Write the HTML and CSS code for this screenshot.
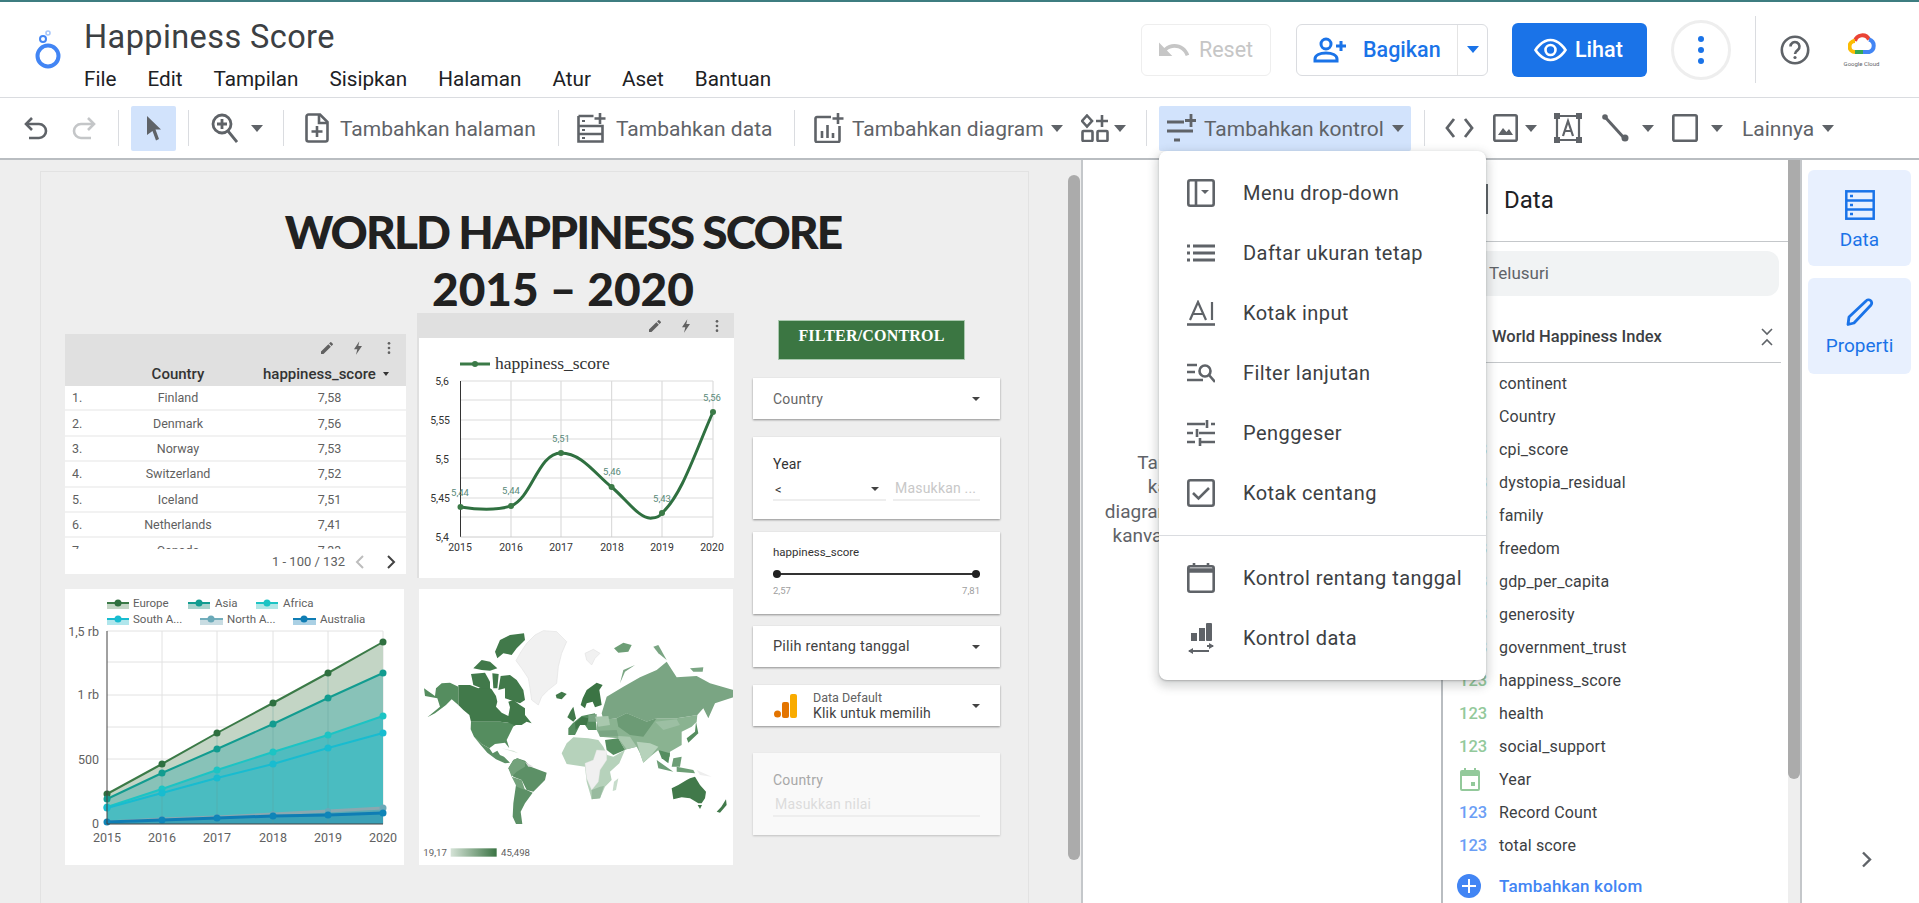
FILE: index.html
```html
<!DOCTYPE html>
<html lang="id">
<head>
<meta charset="utf-8">
<title>Happiness Score</title>
<link rel="stylesheet" href="styles.css">
</head>
<body>
<div class="app">
  <header class="header">
    <svg class="logo" width="28" height="40" viewBox="0 0 28 40"><circle cx="14" cy="26" r="10.5" fill="none" stroke="#4285f4" stroke-width="4"/><circle cx="9" cy="9" r="3" fill="none" stroke="#4285f4" stroke-width="2"/><circle cx="14" cy="3" r="2" fill="none" stroke="#a8c7fa" stroke-width="1.6"/></svg>
    <div class="doc">
      <div class="doc-title">Happiness Score</div>
      <nav class="menubar"><span>File</span><span>Edit</span><span>Tampilan</span><span>Sisipkan</span><span>Halaman</span><span>Atur</span><span>Aset</span><span>Bantuan</span></nav>
    </div>
    <div class="actions">
      <div class="btn-reset">
        <svg width="31" height="22" viewBox="2 6 21 12"><path fill="#c6c6c6" d="M12.5 8c-2.65 0-5.05.99-6.9 2.6L2 7v9h9l-3.62-3.62c1.39-1.16 3.16-1.88 5.12-1.88 3.54 0 6.55 2.31 7.6 5.5l2.37-.78C21.08 11.03 17.15 8 12.5 8z"/></svg>
        <span>Reset</span>
      </div>
      <div class="btn-share">
        <div class="share-main">
          <svg width="34" height="26" viewBox="0 0 34 26" fill="none" stroke="#1a73e8" stroke-width="3"><circle cx="13" cy="7" r="5"/><path d="M2 24v-2c0-4 5-6 11-6s11 2 11 6v2z"/><path d="M23 9h10M28 4v10"/></svg>
          <span>Bagikan</span>
        </div>
        <div class="share-more"><i class="caret caret-blue"></i></div>
      </div>
      <div class="btn-view">
        <svg width="33" height="24" viewBox="0 0 33 24" fill="none" stroke="#fff" stroke-width="2.6"><path d="M1.5 12S7.5 2 16.5 2s15 10 15 10-6 10-15 10-15-10-15-10z"/><circle cx="16.5" cy="12" r="5"/></svg>
        <span>Lihat</span>
      </div>
      <div class="btn-more"><i></i><i></i><i></i></div>
      <div class="head-sep"></div>
      <svg class="help" width="30" height="30" viewBox="0 0 30 30"><circle cx="15" cy="15" r="13.2" fill="none" stroke="#5f6368" stroke-width="2.6"/><path d="M10.5 11.5a4.5 4.5 0 1 1 7.2 3.6c-1.6 1.2-2.7 2-2.7 4" fill="none" stroke="#5f6368" stroke-width="2.6"/><circle cx="15" cy="22.5" r="1.6" fill="#5f6368"/></svg>
      <div class="gcloud">
        <svg width="28" height="23" viewBox="0 0 28 23" fill="none" stroke-width="4"><path d="M7 9a7.500 7.500 0 0 1 14-1.500" stroke="#ea4335"/><path d="M21 7.500A6.500 6.500 0 0 1 21 20H15" stroke="#4285f4"/><path d="M15 20H7" stroke="#34a853"/><path d="M7 20A5.500 5.500 0 0 1 7 9" stroke="#fbbc04"/></svg>
        <span>Google Cloud</span>
      </div>
    </div>
  </header>

  <div class="toolbar">
    <svg class="g0" width="25" height="26" viewBox="0 0 25 26" fill="none" stroke="#5f6368" stroke-width="2.6"><path d="M9 3L3 9l6 6"/><path d="M3 9h13a6 6 0 0 1 0 14H6"/></svg>
    <svg class="g24" width="25" height="26" viewBox="0 0 25 26" fill="none" stroke="#c4c6c8" stroke-width="2.6"><path d="M16 3l6 6-6 6"/><path d="M22 9H9a6 6 0 0 0 0 14h10"/></svg>
    <div class="sep g21"></div>
    <div class="tool-on g12"><svg width="16" height="26" viewBox="0 0 16 26"><path fill="#5f6368" d="M1 1l14 13.500H9.500L13 24l-3 1.500L6.500 16 1 20z"/></svg></div>
    <div class="sep g12"></div>
    <svg class="g22" width="27" height="30" viewBox="0 0 27 30" fill="none" stroke="#5f6368" stroke-width="2.800"><circle cx="11" cy="11" r="9"/><path d="M11 6v10M6 11h10M17 18l9 11"/></svg>
    <i class="caret g13"></i>
    <div class="sep g20"></div>
    <svg class="g21" width="24" height="30" viewBox="0 0 24 30" fill="none" stroke="#5f6368" stroke-width="2.600"><path d="M15 1.500H3.500a2 2 0 0 0-2 2v23a2 2 0 0 0 2 2h17a2 2 0 0 0 2-2V9z"/><path d="M14 2v8h8M12 13v11M6.500 18.500h11"/></svg>
    <span class="tool-text g11 w196">Tambahkan halaman</span>
    <div class="sep g22"></div>
    <svg class="g18" width="29" height="30" viewBox="0 0 29 30" fill="none" stroke="#5f6368" stroke-width="2.600"><path d="M1.500 3h15M1.500 3v25.500h24V13h-24M1.500 21h24M1.500 11"/><path d="M23 0v11M17.500 5.500h11" /><path d="M5 8h3M5 17h3M5 25h3" stroke-width="2"/></svg>
    <span class="tool-text g10 w155">Tambahkan data</span>
    <div class="sep g23"></div>
    <svg class="g19" width="30" height="30" viewBox="0 0 30 30" fill="none" stroke="#5f6368" stroke-width="2.600"><path d="M17 4H3a1.500 1.500 0 0 0-1.500 1.500v22A1.500 1.500 0 0 0 3 29h21a1.500 1.500 0 0 0 1.500-1.500V13"/><path d="M24 0v11M18.500 5.500h11M8 25v-7M13.500 25V12M19 25v-5"/></svg>
    <span class="tool-text g8 w191">Tambahkan diagram</span>
    <i class="caret g8"></i>
    <svg class="g18" width="28" height="28" viewBox="0 0 28 28" fill="none" stroke="#5f6368" stroke-width="2.600"><path d="M6 1.500L11 7 6 12.500 1 7zM21 1v12M15 7h12"/><rect x="1.500" y="17" width="10" height="10" rx="1"/><rect x="16.500" y="17" width="10" height="10" rx="1"/></svg>
    <i class="caret g5"></i>
    <div class="sep g20"></div>
    <div class="tool-active g12">
      <svg width="29" height="28" viewBox="0 0 29 28" fill="none" stroke="#5f6368" stroke-width="2.800"><path d="M0 8h17M24 0v13M18 6.500h11M0 17h26M7 26h6"/></svg>
      <span class="tool-text g8 w180">Tambahkan kontrol</span>
      <i class="caret g8"></i>
    </div>
    <div class="sep g13"></div>
    <svg class="g20" width="29" height="22" viewBox="0 0 29 22" fill="none" stroke="#5f6368" stroke-width="2.800"><path d="M9 2L2 11l7 9M20 2l7 9-7 9"/></svg>
    <svg class="g19" width="25" height="28" viewBox="0 0 25 28"><rect x="1.300" y="1.300" width="22.400" height="25.400" rx="1.500" fill="none" stroke="#5f6368" stroke-width="2.600"/><path fill="#5f6368" d="M5 21l5-7 3.500 4 2.500-3 4 6z"/></svg>
    <i class="caret g7"></i>
    <svg class="g17" width="28" height="30" viewBox="0 0 28 30" fill="none" stroke="#5f6368" stroke-width="2.200"><path d="M4 3h20M4 27h20M3 5v20M25 5v20"/><path d="M0 0h6v6H0zM22 0h6v6h-6zM0 24h6v6H0zM22 24h6v6h-6z" fill="#5f6368" stroke="none"/><path d="M9 23l5-15 5 15M11 18h6"/></svg>
    <svg class="g20" width="27" height="28" viewBox="0 0 27 28" fill="none" stroke="#5f6368" stroke-width="3"><path d="M3 3l20 22"/><circle cx="3" cy="3" r="2.800" fill="#5f6368" stroke="none"/><circle cx="23" cy="24" r="3.500" fill="#5f6368" stroke="none"/></svg>
    <i class="caret g13"></i>
    <svg class="g18" width="26" height="28" viewBox="0 0 26 28"><rect x="1.300" y="1.300" width="23.400" height="25.400" rx="1.500" fill="none" stroke="#5f6368" stroke-width="2.600"/></svg>
    <i class="caret g13"></i>
    <span class="tool-text g19 w73">Lainnya</span>
    <i class="caret g7"></i>
  </div>

  <main class="main">
    <section class="canvas">
      <div class="page">
        <h1 class="report-title"><span class="title-top">WORLD HAPPINESS SCORE</span><br>2015 – 2020</h1>

        <div class="table-card">
          <div class="widget-bar">
            <svg width="16" height="16" viewBox="0 0 24 24"><path fill="#616161" d="M3 17.250V21h3.750L17.810 9.940l-3.750-3.750L3 17.250zM20.710 7.040a1 1 0 0 0 0-1.410l-2.340-2.340a1 1 0 0 0-1.410 0l-1.830 1.830 3.750 3.750 1.830-1.830z"/></svg>
            <svg width="16" height="16" viewBox="0 0 24 24"><path fill="#616161" d="M14 2L6 14h5l-2 8 9-13h-5.500z"/></svg>
            <svg width="16" height="16" viewBox="0 0 24 24"><circle cx="12" cy="5" r="2" fill="#616161"/><circle cx="12" cy="12" r="2" fill="#616161"/><circle cx="12" cy="19" r="2" fill="#616161"/></svg>
          </div>
          <div class="t-head"><span></span><span>Country</span><span class="t-sort">happiness_score<i class="caret caret-mini"></i></span></div>
          <div class="t-body">
            <div class="t-row"><span>1.</span><span>Finland</span><span>7,58</span></div>
            <div class="t-row"><span>2.</span><span>Denmark</span><span>7,56</span></div>
            <div class="t-row"><span>3.</span><span>Norway</span><span>7,53</span></div>
            <div class="t-row"><span>4.</span><span>Switzerland</span><span>7,52</span></div>
            <div class="t-row"><span>5.</span><span>Iceland</span><span>7,51</span></div>
            <div class="t-row"><span>6.</span><span>Netherlands</span><span>7,41</span></div>
            <div class="t-row"><span>7.</span><span>Canada</span><span>7,33</span></div>
          </div>
          <div class="t-foot">
            <span>1 - 100 / 132</span>
            <svg width="10" height="14" viewBox="0 0 10 14" fill="none" stroke="#bdbdbd" stroke-width="2"><path d="M8 1L2 7l6 6"/></svg>
            <svg width="10" height="14" viewBox="0 0 10 14" fill="none" stroke="#424242" stroke-width="2"><path d="M2 1l6 6-6 6"/></svg>
          </div>
        </div>

        <div class="line-card">
          <div class="widget-bar widget-bar-line">
            <svg width="16" height="16" viewBox="0 0 24 24"><path fill="#616161" d="M3 17.250V21h3.750L17.810 9.940l-3.750-3.750L3 17.250zM20.710 7.040a1 1 0 0 0 0-1.410l-2.340-2.340a1 1 0 0 0-1.410 0l-1.830 1.830 3.750 3.750 1.830-1.830z"/></svg>
            <svg width="16" height="16" viewBox="0 0 24 24"><path fill="#616161" d="M14 2L6 14h5l-2 8 9-13h-5.500z"/></svg>
            <svg width="16" height="16" viewBox="0 0 24 24"><circle cx="12" cy="5" r="2" fill="#616161"/><circle cx="12" cy="12" r="2" fill="#616161"/><circle cx="12" cy="19" r="2" fill="#616161"/></svg>
          </div>
          <svg class="line-svg" width="315" height="240" viewBox="419 338 315 240">
            <path d="M460 364h30" stroke="#3b7a47" stroke-width="3"/><circle cx="475" cy="364" r="3" fill="#3b7a47"/>
            <text x="495" y="369" class="serif-legend">happiness_score</text>
            <g stroke="#dcdcdc" stroke-width="1.200" fill="none">
              <path d="M460.500 381H713M460.500 400H713M460.500 420H713M460.500 439H713M460.500 459H713M460.500 478H713M460.500 498H713M460.500 517H713"/>
              <path d="M511 381V537M561 381V537M611.600 381V537M662 381V537M713 381V537"/>
            </g>
            <path d="M460.500 381V537" stroke="#333" stroke-width="1"/>
            <path d="M460.500 537H713" stroke="#ccc"/>
            <path d="M460.500 507C480 510 498 510 511 506C532 498 538 453 561 453C582 453 596 475 611.600 487C626 499 640 520 652 518C657 518 660 516 662 513C682 495 696 450 713 412" fill="none" stroke="#2f7040" stroke-width="3"/>
            <g fill="#3b7a47"><circle cx="460.500" cy="507" r="3"/><circle cx="511" cy="506" r="3"/><circle cx="561" cy="453" r="3"/><circle cx="611.600" cy="487" r="3"/><circle cx="662" cy="513" r="3"/><circle cx="713" cy="412" r="3"/></g>
            <g class="axis" text-anchor="end"><text x="449" y="385">5,6</text><text x="450" y="424">5,55</text><text x="449" y="463">5,5</text><text x="450" y="502">5,45</text><text x="449" y="541">5,4</text></g>
            <g class="axis" text-anchor="middle"><text x="460" y="551">2015</text><text x="511" y="551">2016</text><text x="561" y="551">2017</text><text x="612" y="551">2018</text><text x="662" y="551">2019</text><text x="712" y="551">2020</text></g>
            <g class="val" text-anchor="middle"><text x="460" y="496">5,44</text><text x="511" y="494">5,44</text><text x="561" y="442">5,51</text><text x="612" y="475">5,46</text><text x="662" y="502">5,43</text><text x="712" y="401">5,56</text></g>
          </svg>
        </div>

        <div class="area-card">
          <svg width="339" height="276" viewBox="65 589 339 276">
            <g class="legend-row">
              <rect x="107" y="603" width="22" height="6" fill="#c3d5c5"/><path d="M107 603h22" stroke="#3b7a47" stroke-width="2"/><circle cx="118" cy="603" r="3.500" fill="#2f7040"/><text x="133" y="607">Europe</text>
              <rect x="188" y="603" width="22" height="6" fill="#a9d3cd"/><path d="M188 603h22" stroke="#129c90" stroke-width="2"/><circle cx="199" cy="603" r="3.500" fill="#129c90"/><text x="215" y="607">Asia</text>
              <rect x="256" y="603" width="22" height="6" fill="#b0e6e6"/><path d="M256 603h22" stroke="#1cc4c4" stroke-width="2"/><circle cx="267" cy="603" r="3.500" fill="#1cc4c4"/><text x="283" y="607">Africa</text>
              <rect x="107" y="619" width="22" height="6" fill="#b0e6ec"/><path d="M107 619h22" stroke="#18bcd0" stroke-width="2"/><circle cx="118" cy="619" r="3.500" fill="#18bcd0"/><text x="133" y="623">South A...</text>
              <rect x="200" y="619" width="23" height="6" fill="#c8dce2"/><path d="M200 619h23" stroke="#72aebc" stroke-width="2"/><circle cx="211" cy="619" r="3.500" fill="#6aa9b8"/><text x="227" y="623">North A...</text>
              <rect x="293" y="619" width="23" height="6" fill="#aad0e4"/><path d="M293 619h23" stroke="#0f7db4" stroke-width="2"/><circle cx="304" cy="619" r="3.500" fill="#0f7db4"/><text x="320" y="623">Australia</text>
            </g>
            <g stroke="#e2e2e2" stroke-width="1" fill="none"><path d="M107 631H383M107 662H383M107 695H383M107 727H383M107 759H383M107 791H383"/><path d="M162 631V824M217 631V824M273 631V824M328 631V824M383 631V824"/></g>
            <polygon fill="#c3d5c5" points="107,794 162,764 217,733 273,703 328,673 383,642 383,824 107,824"/>
            <polygon fill="#88c2b8" points="107,799 162,773 217,749 273,724 328,698 383,673 383,824 107,824"/>
            <polygon fill="#50bcbf" points="107,807 162,789 217,770 273,752 328,735 383,716 383,824 107,824"/>
            <polygon fill="#4abcc1" points="107,808 162,793 217,778 273,764 328,748 383,733 383,824 107,824"/>
            <polygon fill="#58a9b6" points="107,822 162,819 217,817 273,814 328,811 383,808 383,824 107,824"/>
            <polygon fill="#3aa0b6" points="107,822 162,820 217,818 273,816 328,815 383,813 383,824 107,824"/>
            <g stroke="#5f9f95" stroke-opacity=".35" fill="none"><path d="M162 764V824M217 733V824M273 703V824M328 673V824"/></g>
            <polyline class="s1" points="107,794 162,764 217,733 273,703 328,673 383,642"/>
            <polyline class="s2" points="107,799 162,773 217,749 273,724 328,698 383,673"/>
            <polyline class="s3" points="107,807 162,789 217,770 273,752 328,735 383,716"/>
            <polyline class="s4" points="107,808 162,793 217,778 273,764 328,748 383,733"/>
            <polyline class="s5" points="107,822 162,819 217,817 273,814 328,811 383,808"/>
            <polyline class="s6" points="107,822 162,820 217,818 273,816 328,815 383,813"/>
            <g fill="#2f7040"><circle cx="107" cy="794" r="3.500"/><circle cx="162" cy="764" r="3.500"/><circle cx="217" cy="733" r="3.500"/><circle cx="273" cy="703" r="3.500"/><circle cx="328" cy="673" r="3.500"/><circle cx="383" cy="642" r="3.500"/></g>
            <g fill="#129c90"><circle cx="107" cy="799" r="3.500"/><circle cx="162" cy="773" r="3.500"/><circle cx="217" cy="749" r="3.500"/><circle cx="273" cy="724" r="3.500"/><circle cx="328" cy="698" r="3.500"/><circle cx="383" cy="673" r="3.500"/></g>
            <g fill="#1cc4c4"><circle cx="107" cy="807" r="3.500"/><circle cx="162" cy="789" r="3.500"/><circle cx="217" cy="770" r="3.500"/><circle cx="273" cy="752" r="3.500"/><circle cx="328" cy="735" r="3.500"/><circle cx="383" cy="716" r="3.500"/></g>
            <g fill="#18bcd0"><circle cx="107" cy="808" r="3.500"/><circle cx="162" cy="793" r="3.500"/><circle cx="217" cy="778" r="3.500"/><circle cx="273" cy="764" r="3.500"/><circle cx="328" cy="748" r="3.500"/><circle cx="383" cy="733" r="3.500"/></g>
            <g fill="#6aa9b8"><circle cx="162" cy="819" r="3"/><circle cx="217" cy="817" r="3"/><circle cx="273" cy="814" r="3"/><circle cx="328" cy="811" r="3"/><circle cx="383" cy="808" r="3.500"/></g>
            <g fill="#0f85b8"><circle cx="107" cy="822" r="3.500"/><circle cx="162" cy="820" r="3.500"/><circle cx="217" cy="818" r="3.500"/><circle cx="273" cy="816" r="3.500"/><circle cx="328" cy="815" r="3.500"/><circle cx="383" cy="813" r="3.500"/></g>
            <path d="M107 631V824H383" fill="none" stroke="#424242" stroke-width="1"/>
            <g class="area-axis" text-anchor="end"><text x="99" y="636">1,5 rb</text><text x="99" y="699">1 rb</text><text x="99" y="764">500</text><text x="99" y="828">0</text></g>
            <g class="area-axis" text-anchor="middle"><text x="107" y="842">2015</text><text x="162" y="842">2016</text><text x="217" y="842">2017</text><text x="273" y="842">2018</text><text x="328" y="842">2019</text><text x="383" y="842">2020</text></g>
          </svg>
        </div>

        <div class="map-card">
          <svg width="314" height="276" viewBox="27 -3 942 828">
            <defs><linearGradient id="scale"><stop offset="0" stop-color="#d5e3d7"/><stop offset="1" stop-color="#3b7444"/></linearGradient></defs>
            <g class="map-land">
              <g fill="#f1f1f1" stroke="#e2e2e2" stroke-width="2">
                <polygon points="318,212 330,190 350,160 375,135 400,122 440,125 470,155 455,190 445,230 440,280 415,300 395,320 385,345 365,330 360,295 355,265 335,235"/>
                <polygon points="525,190 550,178 570,190 555,205 545,225 530,210"/>
              </g>
              <g fill="#41794a">
                <polygon points="145,285 180,285 205,295 225,285 245,298 258,318 262,335 258,350 275,368 295,378 300,352 295,335 310,330 330,345 345,355 345,375 365,400 350,395 335,405 318,405 305,412 295,398 270,395 183,395 178,375 160,360 145,345"/>
                <polygon points="265,300 285,295 285,325 330,340 345,330 340,300 320,270 300,255 272,258"/>
                <polygon points="255,185 270,150 300,135 342,130 345,150 320,175 305,195 280,190 262,205"/>
                <polygon points="190,235 215,210 240,215 262,235 240,242 215,240"/>
                <polygon points="183,252 225,248 240,275 240,295 215,295 190,285"/>
                <polygon points="247,250 266,252 262,295 250,295"/>
                <polygon points="437,315 455,305 470,312 455,328 440,325"/>
                <polygon points="785,595 805,585 830,570 840,565 855,560 870,585 888,605 885,625 875,640 865,640 840,625 815,622 790,628"/>
                <polygon points="863,645 876,645 870,657"/>
                <polygon points="920,665 934,650 948,628 950,645 930,668"/>
                <polygon points="472,382 482,362 490,350 498,385 490,395"/>
              </g>
              <polygon fill="#8ab391" points="575,390 620,385 650,370 710,395 740,385 800,385 830,380 862,375 860,395 845,410 815,425 815,465 780,485 780,500 755,490 745,480 720,500 700,518 690,490 680,470 650,478 645,480 625,445 570,440 560,420 560,400"/>
              <g fill="#558d5f">
                <polygon points="42,295 75,318 78,295 95,280 120,278 145,290 145,345 125,328 108,345 75,370 52,382 90,350 82,325 45,318"/>
                <polygon points="183,395 270,395 295,398 312,405 300,430 290,450 298,475 285,458 255,462 238,475 215,462 192,440 182,418"/>
                <polygon points="488,400 515,378 555,370 560,420 535,420 525,405 510,405 495,435 475,435 475,415"/>
                <polygon points="858,395 865,430 835,458 830,445 855,425"/>
                <polygon points="585,450 625,445 645,480 610,495 590,480"/>
                <polygon points="745,480 780,490 775,520 755,505"/>
              </g>
              <polygon fill="#3f7748" points="495,398 515,380 535,385 530,405 510,405 497,420"/>
              <polygon fill="#7aa583" points="535,375 560,372 560,395 535,395"/>
              <polygon fill="#3b7444" points="512,345 518,325 530,300 560,278 578,285 568,300 575,345 555,352 548,335 530,340 525,355"/>
              <g fill="#5c9066">
                <polygon points="192,440 215,462 238,475 248,490 262,482 270,495 282,500 300,518 285,520 258,508 232,488 212,465"/>
                <polygon points="295,535 310,510 322,505 345,512 362,530 410,548 405,570 385,590 370,605 350,600 335,570 310,560"/>
                <polygon points="318,585 350,600 368,608 345,640 332,665 337,702 318,702 308,680 310,640"/>
              </g>
              <polygon fill="#73a27b" points="295,535 310,510 322,505 345,515 345,530 320,545 305,560"/>
              <polygon fill="#73a27b" points="305,560 335,570 345,600 320,590"/>
              <polygon fill="#dddddd" points="345,515 370,530 355,530"/>
              <polygon fill="#cfe0d2" points="275,475 310,482 325,490 300,482"/>
              <g fill="#7aa583">
                <polygon points="575,370 590,320 640,290 690,262 740,240 770,215 800,262 860,258 900,280 970,300 970,322 915,340 895,385 880,355 862,375 830,380 800,385 740,385 710,395 650,370 620,385 580,390"/>
                <polygon points="565,422 620,420 625,438 570,440"/>
                <polygon points="730,170 745,165 770,210 745,190"/>
                <polygon points="630,280 640,240 675,225 645,245"/>
                <polygon points="840,235 880,232 878,245 850,245"/>
              </g>
              <polygon fill="#6c9b75" points="620,385 650,370 710,395 740,385 700,440 660,435 625,410"/>
              <polygon fill="#9cbfa3" points="735,395 800,388 810,405 760,420"/>
              <g fill="#6d9e76">
                <polygon points="612,175 640,158 665,165 655,185 625,188"/>
                <polygon points="740,510 790,545 745,535"/>
                <polygon points="800,530 850,540 855,550 800,545"/>
                <polygon points="790,505 815,500 810,530 785,530"/>
              </g>
              <g fill="#a9c8ae">
                <polygon points="555,380 595,378 600,405 565,410"/>
                <polygon points="625,438 660,440 680,470 650,478 625,445"/>
              </g>
              <polygon fill="#b6d2bb" points="680,455 720,460 745,470 720,500 700,518 690,490"/>
              <polygon fill="#b6d2bb" points="455,490 470,460 490,442 535,445 565,450 580,470 592,495 610,500 645,480 628,520 600,545 605,570 585,590 570,625 545,628 530,575 525,530 490,525 470,522"/>
              <polygon fill="#c7dccb" points="612,575 625,565 618,600 608,603"/>
              <polygon fill="#f0f0f0" stroke="#e4e4e4" points="525,520 550,510 560,480 590,482 590,510 570,540 565,575 545,600 530,565"/>
              <polygon fill="#98bb9f" points="545,600 570,590 582,588 570,625 545,628"/>
              <polygon fill="#eeeeee" points="860,540 905,560 870,555"/>
            </g>
            <text x="40" y="797" class="map-scale">19,17</text>
            <rect x="122" y="775" width="138" height="25" fill="url(#scale)"/>
            <text x="273" y="797" class="map-scale">45,498</text>
          </svg>
        </div>

        <div class="filter-title">FILTER/CONTROL</div>

        <div class="ctl ctl-a ctl-row"><span class="ctl-label">Country</span><i class="caret caret-sm"></i></div>
        <div class="ctl ctl-b">
          <div class="ctl-year">Year</div>
          <div class="ctl-fields">
            <div class="ctl-sel"><span>&lt;</span><i class="caret caret-sm"></i></div>
            <div class="ctl-inp">Masukkan ...</div>
          </div>
        </div>
        <div class="ctl ctl-c">
          <div class="ctl-small">happiness_score</div>
          <div class="slider"><i></i><i></i></div>
          <div class="ctl-range"><span>2,57</span><span>7,81</span></div>
        </div>
        <div class="ctl ctl-d ctl-row"><span class="ctl-pick">Pilih rentang tanggal</span><i class="caret caret-sm"></i></div>
        <div class="ctl ctl-e ctl-row">
          <svg class="ga" width="23" height="24" viewBox="0 0 23 24"><rect x="16" y="0" width="7" height="24" rx="2" fill="#f9ab00"/><rect x="8" y="8" width="7" height="16" rx="2" fill="#e37400"/><circle cx="3.500" cy="20" r="3.500" fill="#e37400"/></svg>
          <div class="ga-text"><div class="ga-top">Data Default</div><div class="ga-bot">Klik untuk memilih</div></div>
          <i class="caret caret-sm"></i>
        </div>
        <div class="ctl ctl-f">
          <div class="ctl-year ctl-dim">Country</div>
          <div class="ctl-inp ctl-inp-wide">Masukkan nilai</div>
        </div>
      </div>
      <div class="canvas-scroll"></div>
    </section>

    <section class="empty-panel">
      <p class="empty-text">Tarik dan lepas kolom kanvas<br>kanvas untuk diagram baru<br>diagram baru atau ke bagian diagram<br>kanvas yang sudah ada di laman ini</p>
    </section>

    <section class="data-panel">
      <div class="data-inner">
        <div class="dp-head"><i class="dp-bar"></i><span>Data</span></div>
        <div class="dp-search">Telusuri</div>
        <div class="dp-source"><span>World Happiness Index</span>
          <svg width="12" height="18" viewBox="0 0 12 18" fill="none" stroke="#5f6368" stroke-width="1.600"><path d="M1 1l5 5 5-5M1 17l5-5 5 5"/></svg>
        </div>
        <ul class="fields">
          <li><b class="t-green t-abc">ABC</b>continent</li>
          <li><b class="t-green t-abc">ABC</b>Country</li>
          <li><b class="t-green">123</b>cpi_score</li>
          <li><b class="t-green">123</b>dystopia_residual</li>
          <li><b class="t-green">123</b>family</li>
          <li><b class="t-green">123</b>freedom</li>
          <li><b class="t-green">123</b>gdp_per_capita</li>
          <li><b class="t-green">123</b>generosity</li>
          <li><b class="t-green">123</b>government_trust</li>
          <li><b class="t-green">123</b>happiness_score</li>
          <li><b class="t-green">123</b>health</li>
          <li><b class="t-green">123</b>social_support</li>
          <li><b class="t-cal"><svg width="20" height="23" viewBox="0 0 20 23" fill="none" stroke="#93c99b" stroke-width="2"><rect x="1" y="3" width="18" height="19" rx="1"/><path d="M1 6h18" stroke-width="4"/><path d="M5 0v3M15 0v3"/><rect x="11" y="14" width="4" height="4" fill="#93c99b" stroke="none"/></svg></b>Year</li>
          <li><b class="t-blue">123</b>Record Count</li>
          <li><b class="t-blue">123</b>total score</li>
        </ul>
        <div class="add-col"><svg width="24" height="24" viewBox="0 0 24 24"><circle cx="12" cy="12" r="12" fill="#4285f4"/><path d="M12 5v14M5 12h14" stroke="#fff" stroke-width="2"/></svg><span>Tambahkan kolom</span></div>
      </div>
      <div class="dp-scroll"><div class="dp-thumb"></div></div>
    </section>

    <aside class="rail">
      <div class="rail-btn">
        <svg width="30" height="30" viewBox="0 0 30 30" fill="none" stroke="#1a73e8" stroke-width="2.500"><rect x="1.300" y="1.300" width="27.400" height="27.400"/><path d="M1 10.500h28M1 19.500h28"/><path d="M5 6h3M5 15h3M5 24h3" stroke-width="2.500"/></svg>
        <span>Data</span>
      </div>
      <div class="rail-btn">
        <svg width="28" height="28" viewBox="0 0 28 28" fill="none" stroke="#1a73e8" stroke-width="2.800"><path d="M3 19L20 3a3 3 0 0 1 5 4L8 25l-6 1.500z" stroke-linejoin="round"/></svg>
        <span>Properti</span>
      </div>
      <svg class="rail-chev" width="11" height="17" viewBox="0 0 11 17" fill="none" stroke="#5f6368" stroke-width="2.400"><path d="M2 1.500l7 7-7 7"/></svg>
    </aside>

    <div class="menu">
      <div class="menu-item"><svg width="28" height="28" viewBox="0 0 28 28" fill="none" stroke="#5f6368" stroke-width="2.600"><rect x="1.300" y="1.300" width="25.400" height="25.400" rx="2"/><path d="M9 1v26"/><path d="M14 11h8l-4 4z" fill="#5f6368" stroke="none"/></svg><span>Menu drop-down</span></div>
      <div class="menu-item"><svg width="28" height="20" viewBox="0 0 28 20" fill="none" stroke="#5f6368" stroke-width="3"><path d="M6 3h22M6 10h22M6 17h22M0 3h3M0 10h3M0 17h3"/></svg><span>Daftar ukuran tetap</span></div>
      <div class="menu-item"><svg width="28" height="26" viewBox="0 0 28 26"><path fill="none" stroke="#5f6368" stroke-width="2.200" d="M3 20l8-18 8 18M5.500 14h11M25 2v18"/><path stroke="#5f6368" stroke-width="2.600" d="M0 24.500h28"/></svg><span>Kotak input</span></div>
      <div class="menu-item"><svg width="28" height="20" viewBox="0 0 28 20" fill="none" stroke="#5f6368" stroke-width="2.600"><path d="M0 2h10M0 9h8M0 17h16"/><circle cx="18" cy="8" r="5.500"/><path d="M22 12l6 7"/></svg><span>Filter lanjutan</span></div>
      <div class="menu-item"><svg width="28" height="26" viewBox="0 0 28 26" fill="none" stroke="#5f6368" stroke-width="2.600"><path d="M0 4h18M24 4h4M0 13h6M12 13h16M0 22h8M14 22h14M20 0v8M10 9v8M13 18v8"/></svg><span>Penggeser</span></div>
      <div class="menu-item"><svg width="28" height="28" viewBox="0 0 28 28" fill="none" stroke="#5f6368" stroke-width="2.600"><rect x="1.300" y="1.300" width="25.400" height="25.400" rx="2"/><path d="M6 14l5.500 5.500L22 9"/></svg><span>Kotak centang</span></div>
      <div class="menu-div"></div>
      <div class="menu-item"><svg width="28" height="30" viewBox="0 0 28 30" fill="none" stroke="#5f6368" stroke-width="2.600"><rect x="1.300" y="3.300" width="25.400" height="25.400" rx="2"/><path d="M1 7.500h26" stroke-width="4.500"/><path d="M7 0v4M21 0v4"/></svg><span>Kontrol rentang tanggal</span></div>
      <div class="menu-item"><svg width="28" height="32" viewBox="0 0 28 32"><rect x="4" y="11" width="6" height="8" fill="#5f6368"/><rect x="12" y="6" width="6" height="13" fill="#5f6368"/><rect x="19" y="1" width="6" height="18" rx="1" fill="#5f6368"/><path d="M2 29h20M20 24h6" stroke="#5f6368" stroke-width="2" fill="none"/><path d="M1 29l5-3v6zM27 24l-5-3v6z" fill="#5f6368"/></svg><span>Kontrol data</span></div>
    </div>
  </main>
</div>
</body>
</html>
```

FILE: styles.css
```css
* { box-sizing: border-box; }
html, body { margin: 0; padding: 0; height: 100%; overflow: hidden; background: #fff; }
body { font-family: Roboto, "Liberation Sans", sans-serif; color: #202124; }
.app { width: 1919px; height: 903px; display: flex; flex-direction: column; border-top: 2px solid #3d7d80; overflow: hidden; }

.header { height: 96px; flex: none; display: flex; align-items: flex-start; border-bottom: 1px solid #dadce0; }
.logo { margin: 28px 0 0 34px; flex: none; }
.doc { margin-left: 22px; }
.doc-title { font-size: 32.500px; line-height: 36px; margin-top: 17px; color: #3c4043; letter-spacing: .4px; white-space: nowrap; }
.menubar { display: flex; margin-top: 11px; font-size: 20.700px; line-height: 26px; color: #202124; }
.menubar span:nth-child(n+2) { margin-left: 31px; }
.actions { margin-left: auto; margin-right: 39px; display: flex; align-items: center; height: 95px; }
.actions > * { flex: none; }
.btn-reset { width: 130px; height: 52px; border: 1px solid #eeeeee; border-radius: 6px; display: flex; align-items: center; justify-content: center; gap: 9px; font-size: 21.500px; color: #c6c6c6; }
.btn-share { width: 192px; height: 52px; margin-left: 25px; border: 1px solid #dadce0; border-radius: 6px; display: flex; color: #1a73e8; }
.share-main { width: 161px; display: flex; align-items: center; padding-left: 16px; gap: 16px; font-size: 21.500px; font-weight: 500; border-right: 1px solid #e4e4e4; }
.share-more { flex: 1; display: flex; align-items: center; justify-content: center; }
.btn-view { width: 135px; height: 54px; margin-left: 24px; border-radius: 6px; background: #1a73e8; color: #fff; display: flex; align-items: center; padding-left: 22px; gap: 8px; font-size: 21.500px; font-weight: 500; }
.btn-more { width: 60px; height: 60px; margin-left: 24px; border: 3px solid #eeeeee; border-radius: 50%; display: flex; flex-direction: column; align-items: center; justify-content: center; gap: 5px; }
.btn-more i { width: 6px; height: 6px; border-radius: 50%; background: #1a73e8; }
.head-sep { width: 1px; height: 67px; margin-left: 24px; background: #dadce0; }
.help { margin-left: 24px; }
.gcloud { width: 37px; margin-left: 33px; display: flex; flex-direction: column; align-items: center; gap: 5px; }
.gcloud span { font-size: 6px; line-height: 8px; white-space: nowrap; color: #5f6368; }

.toolbar { height: 62px; flex: none; display: flex; align-items: center; padding-left: 23px; border-bottom: 2px solid #b9bdc1; }
.toolbar > * { flex: none; }
.sep { width: 1px; height: 36px; background: #dadce0; }
.tool-on { width: 45px; height: 45px; background: #d2e3fc; border-radius: 2px; display: flex; align-items: center; justify-content: center; }
.tool-active { width: 252px; height: 45px; background: #d2e3fc; border-radius: 2px; display: flex; align-items: center; padding-left: 8px; }
.tool-active > * { flex: none; }
.tool-text { font-size: 21px; color: #5f6368; white-space: nowrap; line-height: 26px; padding-top: 2px; }
.w196 { width: 196px; } .w155 { width: 155px; } .w191 { width: 191px; } .w180 { width: 180px; } .w73 { width: 73px; }
.caret { display: block; width: 0; height: 0; border-left: 6px solid transparent; border-right: 6px solid transparent; border-top: 7px solid #5f6368; }
.caret-blue { border-top-color: #1a73e8; }
.caret-sm { border-left-width: 4px; border-right-width: 4px; border-top-width: 4px; border-top-color: #424242; flex: none; }
.caret-mini { display: inline-block; margin-left: 7px; vertical-align: 3px; border-left-width: 3px; border-right-width: 3px; border-top-width: 4px; border-top-color: #333; }
.g0 { margin-left: 0; } .g5 { margin-left: 5px; } .g7 { margin-left: 7px; } .g8 { margin-left: 8px; } .g10 { margin-left: 10px; } .g11 { margin-left: 11px; } .g12 { margin-left: 12px; } .g13 { margin-left: 13px; } .g17 { margin-left: 17px; } .g18 { margin-left: 18px; } .g19 { margin-left: 19px; } .g20 { margin-left: 20px; } .g21 { margin-left: 21px; } .g22 { margin-left: 22px; } .g23 { margin-left: 23px; } .g24 { margin-left: 24px; }

.main { position: relative; flex: 1; display: flex; min-height: 0; }
.canvas { position: relative; width: 1081px; flex: none; background: #eeeeee; overflow: hidden; padding: 12px 0 0 41px; }
.page { position: relative; width: 987px; height: 800px; background: #eeeeee; box-shadow: 0 0 0 1px #e2e2e2; }
.canvas-scroll { position: absolute; left: 1068px; top: 15px; width: 12px; height: 685px; background: #ababab; border-radius: 6px; }

.report-title { position: absolute; left: 172px; top: 31px; width: 700px; margin: 0; text-align: center; font-family: Lato, sans-serif; font-weight: 900; font-size: 46px; line-height: 57px; color: #212121; }
.title-top { letter-spacing: -1.900px; }

.table-card { position: absolute; left: 24px; top: 162px; width: 341px; height: 240px; background: #fff; display: flex; flex-direction: column; }
.widget-bar { height: 27px; flex: none; background: #e0e0e0; display: flex; align-items: center; justify-content: flex-end; gap: 15px; padding-right: 9px; }
.widget-bar-line { height: 25px; }
.t-head, .t-row { display: grid; grid-template-columns: 58px 110px 1fr; align-items: center; text-align: center; }
.t-head { height: 25px; background: #e0e0e0; font-size: 15px; font-weight: 500; color: #333; flex: none; }
.t-sort { text-align: left; margin-left: 30px; white-space: nowrap; }
.t-body { height: 163px; overflow: hidden; flex: none; }
.t-row { height: 25.400px; font-size: 12.500px; color: #5f5f5f; border-bottom: 2px solid #f2f2f2; }
.t-row > :first-child { text-align: left; padding-left: 7px; }
.t-row > :last-child { padding-left: 20px; }
.t-foot { flex: 1; display: flex; align-items: center; justify-content: flex-end; gap: 21px; padding-right: 10px; font-size: 13px; color: #616161; }
.t-foot span { margin-right: -11px; }

.line-card { position: absolute; left: 376px; top: 141px; width: 317px; height: 265px; background: #e0e0e0; display: flex; flex-direction: column; }
.line-svg { display: block; margin-left: 2px; background: #fff; }
.serif-legend { font-family: "Liberation Serif", serif; font-size: 17.500px; fill: #333; }
.axis { font-size: 10.500px; fill: #333; }
.val { font-size: 9.500px; fill: #5a8a7a; }
.area-card { position: absolute; left: 24px; top: 417px; width: 339px; height: 276px; background: #fff; }
.area-card svg, .map-card svg { display: block; }
.legend-row { font-size: 11.500px; fill: #616161; }
.area-axis { font-size: 12.500px; fill: #616161; }
.s1, .s2, .s3, .s4, .s5, .s6 { fill: none; stroke-width: 2; }
.s1 { stroke: #3b7a47; } .s2 { stroke: #129c90; } .s3 { stroke: #1cc4c4; } .s4 { stroke: #18bcd0; } .s5 { stroke: #8aa8b0; stroke-width: 3; } .s6 { stroke: #0f7db4; stroke-width: 3; }
.map-card { position: absolute; left: 378px; top: 417px; width: 314px; height: 276px; background: #fff; }
.map-land { filter: blur(.5px); }
.map-scale { font-size: 29px; fill: #616161; }

.filter-title { position: absolute; left: 737px; top: 148px; width: 187px; height: 40px; background: #3b7642; border: 1px solid #a9c8ae; color: #fff; text-align: center; font-family: "Liberation Serif", serif; font-weight: 700; font-size: 16px; line-height: 30px; letter-spacing: .2px; }
.ctl { position: absolute; left: 712px; width: 247px; background: #fff; box-shadow: 0 1px 2px rgba(0,0,0,.4); padding: 0 20px; }
.ctl-row { display: flex; align-items: center; justify-content: space-between; }
.ctl-a { top: 206px; height: 41px; }
.ctl-b { top: 265px; height: 82px; padding-top: 17px; }
.ctl-c { top: 360px; height: 82px; padding-top: 12px; }
.ctl-d { top: 454px; height: 41px; }
.ctl-e { top: 513px; height: 41px; padding-left: 21px; }
.ctl-f { top: 581px; height: 82px; padding-top: 17px; background: #f9f9f9; box-shadow: 0 1px 2px rgba(0,0,0,.2); }
.ctl-label { font-size: 14px; color: #666; letter-spacing: .2px; }
.ctl-year { font-size: 14px; line-height: 20px; color: #333; letter-spacing: .2px; }
.ctl-dim { color: #a8a8a8; }
.ctl-fields { display: flex; gap: 7px; margin-top: 5px; }
.ctl-sel { width: 113px; height: 22px; border-bottom: 2px solid #eeeeee; display: flex; align-items: center; justify-content: space-between; padding: 0 7px 0 2px; font-size: 13px; color: #333; }
.ctl-inp { flex: 1; height: 22px; border-bottom: 2px solid #eeeeee; font-size: 14px; line-height: 19px; color: #c8c8c8; padding-left: 2px; letter-spacing: .2px; }
.ctl-inp-wide { margin-top: 5px; color: #dcdcdc; height: 22px; }
.ctl-small { font-size: 11.500px; line-height: 16px; color: #333; }
.slider { position: relative; height: 2px; margin: 13px 0 10px; background: #333; }
.slider i { position: absolute; top: -3px; width: 8px; height: 8px; border-radius: 50%; background: #212121; left: 0; }
.slider i + i { left: auto; right: 0; }
.ctl-range { display: flex; justify-content: space-between; font-size: 9.500px; color: #9e9e9e; }
.ctl-pick { font-size: 14.500px; color: #424242; letter-spacing: .2px; }
.ga { flex: none; }
.ga-text { flex: 1; margin-left: 16px; }
.ga-top { font-size: 12.500px; line-height: 15px; color: #616161; }
.ga-bot { font-size: 14px; line-height: 16px; color: #424242; letter-spacing: .2px; }

.empty-panel { width: 362px; flex: none; background: #fff; border-left: 2px solid #c4c7ca; border-right: 2px solid #b9bdc1; padding-top: 291px; }
.empty-text { margin: 0; width: 358px; text-align: center; font-size: 19px; line-height: 24.300px; color: #5f6368; white-space: nowrap; }

.data-panel { width: 359px; flex: none; display: flex; background: #fff; border-right: 2px solid #c4c7ca; }
.data-inner { flex: 1; min-width: 0; }
.dp-head { height: 82px; border-bottom: 1px solid #c4c7ca; display: flex; align-items: center; padding-left: 61px; position: relative; font-size: 24px; color: #202124; padding-bottom: 2px; }
.dp-bar { position: absolute; left: 43px; top: 24px; width: 2px; height: 30px; background: #5f6368; }
.dp-search { margin: 9px 9px 0 7px; height: 45px; background: #f1f3f4; border-radius: 12px; padding-left: 39px; font-size: 17px; line-height: 45px; color: #5f6368; }
.dp-source { height: 67px; margin-right: 7px; border-bottom: 1px solid #c4c7ca; display: flex; align-items: center; justify-content: space-between; padding: 15px 8px 0 49px; font-size: 16.500px; font-weight: 500; color: #3c4043; }
.fields { list-style: none; margin: 4px 0 0; padding: 0; }
.fields li { height: 33px; display: flex; align-items: center; padding-left: 16px; font-size: 16px; color: #3c4043; letter-spacing: .15px; }
.fields b { width: 22px; flex: none; margin-right: 18px; font-size: 16.500px; font-weight: 500; letter-spacing: 0; }
.fields .t-abc { font-size: 12px; }
.t-green { color: #93c99b; }
.t-blue { color: #6b9ef5; }
.t-cal { display: flex; align-items: center; padding-left: 1px; }
.add-col { display: flex; align-items: center; height: 33px; margin-top: 7px; padding-left: 14px; gap: 18px; font-size: 17px; font-weight: 500; color: #4285f4; letter-spacing: .2px; }
.dp-scroll { width: 12px; flex: none; background: #eeeeee; }
.dp-thumb { height: 619px; background: #ababab; border-radius: 0 0 6px 6px; }

.rail { flex: 1; position: relative; padding: 10px 8px 0 6px; }
.rail-btn { height: 96px; margin-bottom: 12px; background: #e8f0fe; border-radius: 6px; display: flex; flex-direction: column; align-items: center; padding-top: 20px; gap: 9px; color: #1a73e8; font-size: 19px; line-height: 22px; }
.rail-chev { position: absolute; left: 59px; top: 691px; }

.menu { position: absolute; left: 1159px; top: -9px; width: 327px; height: 529px; background: #fff; border-radius: 8px; padding-top: 12px; box-shadow: 0 4px 10px 3px rgba(60,64,67,.2), 0 1px 2px rgba(60,64,67,.3); z-index: 5; }
.menu-item { height: 60px; display: flex; align-items: center; position: relative; padding-left: 84px; font-size: 20px; color: #3c4043; letter-spacing: .45px; white-space: nowrap; }
.menu-item svg { position: absolute; left: 28px; top: 50%; transform: translateY(-50%); }
.menu-div { height: 1px; margin: 12px 0; background: #dadce0; }
```
